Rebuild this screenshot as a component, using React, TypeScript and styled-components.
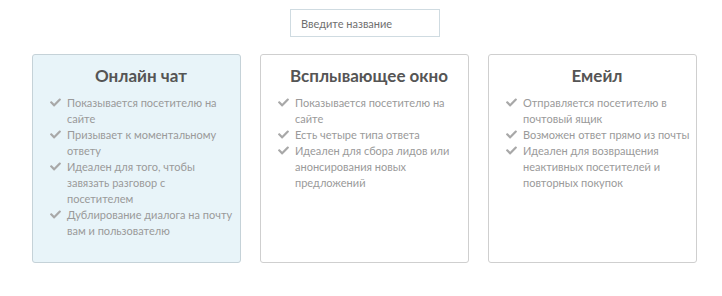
import styled, { createGlobalStyle } from "styled-components"
import { FaCheck } from "react-icons/fa"

const Global = createGlobalStyle`
body {
    margin: 0;
    background: #fff;
    font-family: Lato, "Open Sans", sans-serif;
}
`

interface Channel {
    title: string
    items: string[]
    active?: boolean
}

const channels: Channel[] = [
    {
        title: "Онлайн чат",
        active: true,
        items: [
            "Показывается посетителю на сайте",
            "Призывает к моментальному ответу",
            "Идеален для того, чтобы завязать разговор с посетителем",
            "Дублирование диалога на почту вам и пользователю",
        ],
    },
    {
        title: "Всплывающее окно",
        items: [
            "Показывается посетителю на сайте",
            "Есть четыре типа ответа",
            "Идеален для сбора лидов или анонсирования новых предложений",
        ],
    },
    {
        title: "Емейл",
        items: [
            "Отправляется посетителю в почтовый ящик",
            "Возможен ответ прямо из почты",
            "Идеален для возвращения неактивных посетителей и повторных покупок",
        ],
    },
]

export default function App() {
    return (
        <Page>
            <Global />
            <SearchRow>
                <NameInput placeholder="Введите название" />
            </SearchRow>
            <Cards>
                {channels.map((c) => (
                    <Card key={c.title} $active={c.active}>
                        <Title>{c.title}</Title>
                        <List>
                            {c.items.map((it) => (
                                <Item key={it}>
                                    <Check><FaCheck /></Check>
                                    <span>{it}</span>
                                </Item>
                            ))}
                        </List>
                    </Card>
                ))}
            </Cards>
        </Page>
    )
}

const Page = styled.div`
width: 722px;
height: 296px;
box-sizing: border-box;
padding: 9px 26px 0 32px;
`

const SearchRow = styled.div`
display: flex;
justify-content: center;
padding-left: 2px;
`

const NameInput = styled.input`
width: 150px;
height: 28px;
box-sizing: border-box;
border: 1px solid #cfdbe1;
border-radius: 0;
padding: 0 10px;
font-family: Lato, sans-serif;
font-size: 11px;
color: #555;
outline: none;
&::placeholder {
    color: #6f6f6f;
}
`

const Cards = styled.div`
display: grid;
grid-template-columns: repeat(3, 209px);
gap: 19px;
margin-top: 17px;
`

const Card = styled.div<{ $active?: boolean }>`
height: 209px;
box-sizing: border-box;
border: 1px solid ${p => p.$active ? "#c5d2d8" : "#cfcfcf"};
border-radius: 3px;
background: ${p => p.$active ? "#e8f4f9" : "#fff"};
padding: 9px 6px 0 17px;
`

const Title = styled.h3`
margin: 0 0 7px;
text-align: center;
padding-right: 2px;
font-size: 17px;
line-height: 24px;
font-weight: 700;
color: #555;
`

const List = styled.ul`
list-style: none;
margin: 0;
padding: 0;
`

const Item = styled.li`
display: flex;
gap: 6px;
font-size: 11px;
line-height: 16px;
color: #9a9a9a;
`

const Check = styled.span`
flex: none;
width: 11px;
color: #a8a8a8;
font-size: 11px;
display: flex;
align-items: flex-start;
svg {
    margin-top: 2px;
}
`
